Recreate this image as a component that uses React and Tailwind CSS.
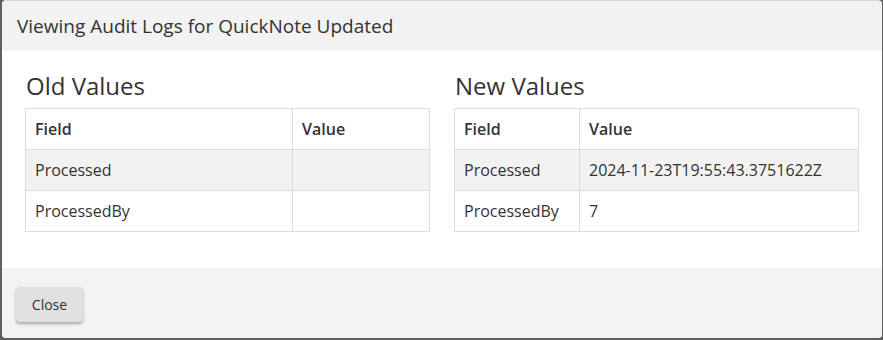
const oldRows = [
  { field: "Processed", value: "" },
  { field: "ProcessedBy", value: "" },
];

const newRows = [
  { field: "Processed", value: "2024-11-23T19:55:43.3751622Z" },
  { field: "ProcessedBy", value: "7" },
];

const ValuesTable = ({ title, rows, fieldWidth }) => (
  <div>
    <h3 className="text-[24px] leading-[29px] text-[#333] pt-[20px] pl-px">{title}</h3>
    <table className="mt-[8px] w-full border-collapse border border-[#ddd] text-[16px] text-[#333]">
      <thead>
        <tr className="bg-white">
          <th
            className="h-[41px] border border-[#ddd] px-[9px] text-left font-semibold"
            style={{ width: fieldWidth }}
          >
            Field
          </th>
          <th className="h-[41px] border border-[#ddd] px-[9px] text-left font-semibold">Value</th>
        </tr>
      </thead>
      <tbody>
        {rows.map((row, i) => (
          <tr key={row.field} className={i % 2 === 0 ? "bg-[#f2f2f2]" : "bg-white"}>
            <td className="h-[41px] border border-[#ddd] px-[9px]">{row.field}</td>
            <td className="h-[41px] border border-[#ddd] px-[9px]">{row.value}</td>
          </tr>
        ))}
      </tbody>
    </table>
  </div>
);

const App = () => {
  return (
    <div
      className="h-[340px] w-[883px] bg-[#5f5f5f] pl-[2px] pr-px pb-[2px]"
      style={{ fontFamily: '"Open Sans", "Liberation Sans", sans-serif' }}
    >
      <div className="flex h-full flex-col overflow-hidden rounded-[4px] border-t border-[#d8d8d8] bg-white">
        {/* Header */}
        <div className="flex h-[50px] items-center bg-[#f2f2f2] pl-[15px]">
          <h2 className="text-[19px] text-[#333]">Viewing Audit Logs for QuickNote Updated</h2>
        </div>

        {/* Body */}
        <div className="grid h-[217px] grid-cols-2 gap-[24px] pl-[23px] pr-[23px]">
          <ValuesTable title="Old Values" rows={oldRows} fieldWidth="267px" />
          <ValuesTable title="New Values" rows={newRows} fieldWidth="125px" />
        </div>

        {/* Footer */}
        <div className="flex flex-1 items-start bg-[#f3f3f3] pl-[14px] pt-[19px]">
          <button className="h-[35px] w-[67px] rounded-[4px] bg-[#e0e0e0] text-[14px] text-[#333] shadow-[0_2px_3px_rgba(0,0,0,0.3)]">
            Close
          </button>
        </div>
      </div>
    </div>
  );
};

export default App;
